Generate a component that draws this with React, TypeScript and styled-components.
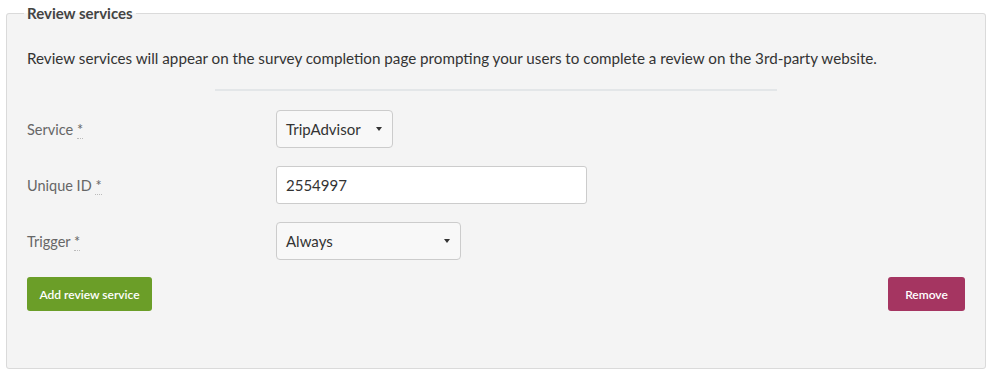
import React from "react";
import styled, { createGlobalStyle } from "styled-components";

const Global = createGlobalStyle`
  html, body { margin: 0; padding: 0; background: #ffffff; }
  body { font-family: "Lato", "Noto Sans", sans-serif; color: #333; }
  * { box-sizing: border-box; }
`;

const Page = styled.div`
  padding: 3px 7px 0 6px;
  width: 993px;
`;

const Panel = styled.fieldset`
  margin: 0;
  border: 1px solid #dadada;
  border-radius: 3px;
  background: #f4f4f4;
  padding: 0 20px 57px 20px;
  min-width: 0;
`;

const Legend = styled.legend`
  font-size: 15px;
  font-weight: 700;
  color: #444;
  padding: 0 3px;
  margin-left: -3px;
  line-height: 20px;
`;

const Intro = styled.p`
  margin: 24px 0 0 0;
  font-size: 15.2px;
  line-height: 22px;
  color: #333;
`;

const Divider = styled.hr`
  width: 60%;
  margin: 20px auto 19px auto;
  border: 0;
  height: 2px;
  background: #e3e6e8;
`;

const Rows = styled.div`
  display: flex;
  flex-direction: column;
  gap: 18px;
`;

const Row = styled.div`
  display: grid;
  grid-template-columns: 249px 1fr;
  align-items: center;
  height: 38px;
`;

const Label = styled.label`
  font-size: 14.5px;
  color: #666;
`;

const Req = styled.abbr`
  text-decoration: none;
  border-bottom: 1px dotted #bbb;
  cursor: help;
`;

const SelectBox = styled.div<{ $w: number }>`
  width: ${(p) => p.$w}px;
  height: 38px;
  border: 1px solid #cccccc;
  border-radius: 4px;
  background: #f8f8f8;
  display: flex;
  align-items: center;
  justify-content: space-between;
  padding: 0 10px 0 9px;
  font-size: 15px;
  color: #333;
`;

const Caret = styled.span`
  width: 0;
  height: 0;
  border-left: 3px solid transparent;
  border-right: 3px solid transparent;
  border-top: 4px solid #333;
`;

const TextInput = styled.input`
  width: 311px;
  height: 38px;
  border: 1px solid #cccccc;
  border-radius: 3px;
  background: #fff;
  padding: 0 9px;
  font-family: inherit;
  font-size: 15px;
  color: #333;
  outline: none;
`;

const Actions = styled.div`
  display: flex;
  justify-content: space-between;
  margin-top: 17px;
`;

const Button = styled.button<{ $bg: string; $w: number }>`
  width: ${(p) => p.$w}px;
  height: 34px;
  border: 0;
  border-radius: 3px;
  background: ${(p) => p.$bg};
  color: #fff;
  font-family: inherit;
  font-size: 12px;
  font-weight: 600;
  cursor: pointer;
`;

export default function App() {
  return (
    <>
      <Global />
      <Page>
        <Panel>
          <Legend>Review services</Legend>
          <Intro>
            Review services will appear on the survey completion page prompting your users to
            complete a review on the 3rd-party website.
          </Intro>
          <Divider />
          <Rows>
            <Row>
              <Label>
                Service <Req title="required">*</Req>
              </Label>
              <SelectBox $w={117}>
                <span>TripAdvisor</span>
                <Caret />
              </SelectBox>
            </Row>
            <Row>
              <Label>
                Unique ID <Req title="required">*</Req>
              </Label>
              <TextInput defaultValue="2554997" />
            </Row>
            <Row>
              <Label>
                Trigger <Req title="required">*</Req>
              </Label>
              <SelectBox $w={185}>
                <span>Always</span>
                <Caret />
              </SelectBox>
            </Row>
          </Rows>
          <Actions>
            <Button $bg="#6b9e28" $w={125}>Add review service</Button>
            <Button $bg="#a53561" $w={77}>Remove</Button>
          </Actions>
        </Panel>
      </Page>
    </>
  );
}
